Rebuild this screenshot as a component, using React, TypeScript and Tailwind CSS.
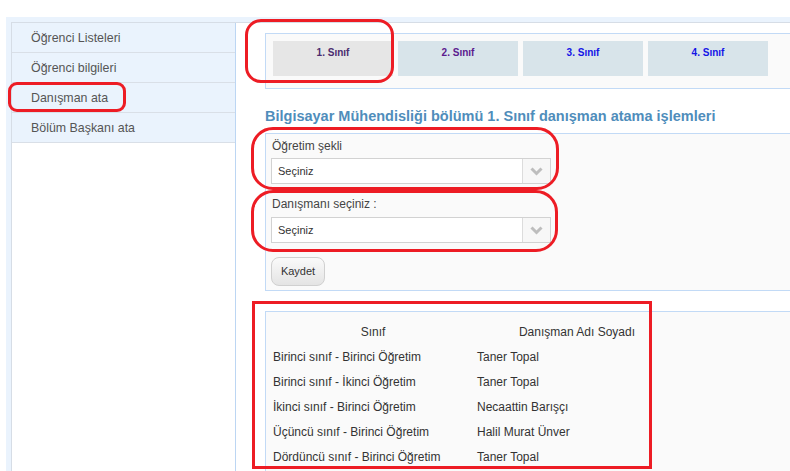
const menuItems = [
  "Öğrenci Listeleri",
  "Öğrenci bilgileri",
  "Danışman ata",
  "Bölüm Başkanı ata",
];

const tabs = [
  { label: "1. Sınıf", active: true, color: "text-[#4b2c6f]" },
  { label: "2. Sınıf", active: false, color: "text-[#5b1a8e]" },
  { label: "3. Sınıf", active: false, color: "text-[#1414e6]" },
  { label: "4. Sınıf", active: false, color: "text-[#1414e6]" },
];

const rows = [
  ["Birinci sınıf - Birinci Öğretim", "Taner Topal"],
  ["Birinci sınıf - İkinci Öğretim", "Taner Topal"],
  ["İkinci sınıf - Birinci Öğretim", "Necaattin Barışçı"],
  ["Üçüncü sınıf - Birinci Öğretim", "Halil Murat Ünver"],
  ["Dördüncü sınıf - Birinci Öğretim", "Taner Topal"],
];

function SelectBox() {
  return (
    <div className="flex w-[280px] h-[26px] border border-[#d2d2d2] bg-white">
      <div className="flex-1 pl-[6px] text-[11px] leading-[24px] text-[#333]">Seçiniz</div>
      <div className="w-[28px] border-l border-[#dcdcdc] bg-[#f7f7f7] flex items-center justify-center">
        <svg width="13" height="9" viewBox="0 0 13 9">
          <path d="M1.5 1.5 L6.5 6.5 L11.5 1.5" fill="none" stroke="#bdbdbd" strokeWidth="3" />
        </svg>
      </div>
    </div>
  );
}

export default function App() {
  return (
    <div className="relative w-[790px] h-[471px] overflow-hidden bg-white font-['Liberation_Sans',Arial,sans-serif]">
      <div className="mt-[17px] ml-[6px] h-[454px] bg-[#eaf3fd] pt-[5px] pl-[5px]">
        <div className="flex h-full border-t border-l border-[#d6dde6]">
          {/* sidebar */}
          <aside className="w-[223px] shrink-0 bg-white">
            {menuItems.map((item) => (
              <div
                key={item}
                className="h-[30px] border-b border-[#d9dfe7] bg-[#eaf3fd] pl-[19px] text-[12.4px] leading-[30px] text-[#555]"
              >
                {item}
              </div>
            ))}
          </aside>

          {/* main */}
          <main className="flex-1 border-l border-[#bcd6f3] bg-white pt-[10px] pl-[29px]">
            <div className="w-[600px] border border-[#c2daf6] bg-[#fafafa] pt-[7px] pb-[12px] pl-[7px]">
              <div className="flex gap-[5px]">
                {tabs.map((t) => (
                  <div
                    key={t.label}
                    className={`w-[120px] h-[35px] pt-[6px] text-center text-[10px] leading-[12px] font-bold ${t.color} ${
                      t.active ? "bg-[#e6e6e6]" : "bg-[#d8e4ea]"
                    }`}
                  >
                    {t.label}
                  </div>
                ))}
              </div>
            </div>

            <h2 className="mt-[17px] text-[14.5px] leading-[20px] font-bold text-[#4f8dbb]">
              Bilgisayar Mühendisliği bölümü 1. Sınıf danışman atama işlemleri
            </h2>

            <div className="mt-[7px] w-[600px] border border-[#c2daf6] bg-[#fafafa] pt-[4px] pb-[4px] pl-[5px]">
              <div className="pl-[1px] text-[12px] leading-[16px] text-[#444]">Öğretim şekli</div>
              <div className="mt-[4px]">
                <SelectBox />
              </div>
              <div className="mt-[12px] pl-[1px] text-[12px] leading-[16px] text-[#444]">Danışmanı seçiniz :</div>
              <div className="mt-[5px]">
                <SelectBox />
              </div>
              <button className="mt-[14px] w-[54px] h-[29px] rounded-[8px] border border-[#d0d0d0] bg-gradient-to-b from-[#fafafa] to-[#e4e4e4] text-[11px] text-[#333]">
                Kaydet
              </button>
            </div>

            <div className="mt-[20px] w-[600px] h-[200px] border-t border-l border-[#c2daf6] bg-[#fafafa] pt-[8px] pl-[5px]">
              <div className="grid grid-cols-[204px_204px] text-[12px] leading-[25px] text-[#333]">
                <div className="px-[2px] text-center">Sınıf</div>
                <div className="px-[2px] text-center">Danışman Adı Soyadı</div>
                {rows.map(([cls, name]) => (
                  <>
                    <div key={cls} className="px-[2px]">{cls}</div>
                    <div key={cls + "-n"} className="px-[2px]">{name}</div>
                  </>
                ))}
              </div>
            </div>
          </main>
        </div>
      </div>

      {/* red annotation marks */}
      <div className="absolute left-[8px] top-[82px] w-[118px] h-[30px] rounded-[9px] border-[3px] border-[#ed1c24]" />
      <div className="absolute left-[245px] top-[19px] w-[149px] h-[64px] rounded-[16px] border-[3px] border-[#ed1c24]" />
      <div className="absolute left-[251px] top-[127px] w-[308px] h-[63px] rounded-[22px] border-[3px] border-[#ed1c24]" />
      <div className="absolute left-[251px] top-[190px] w-[307px] h-[62px] rounded-[22px] border-[3px] border-[#ed1c24]" />
      <div className="absolute left-[252px] top-[301px] w-[400px] h-[168px] border-[3px] border-[#ed1c24]" />
    </div>
  );
}
